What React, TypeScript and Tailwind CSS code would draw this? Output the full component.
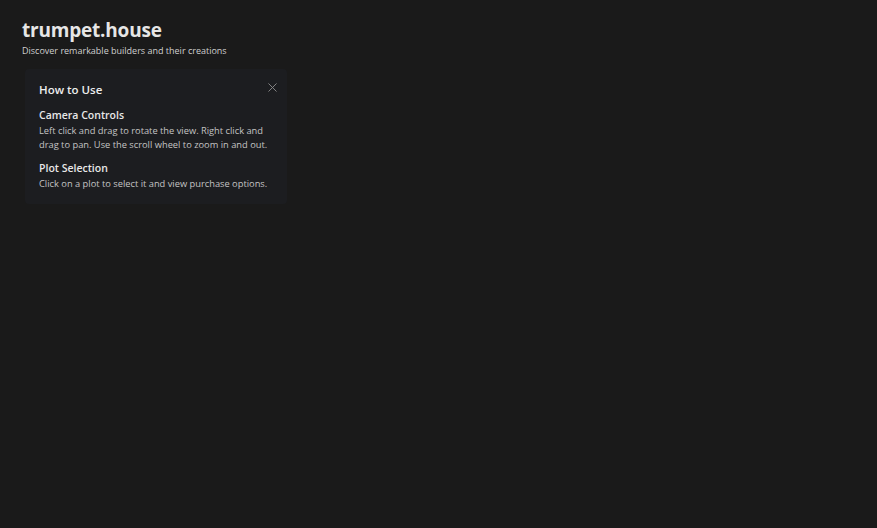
import { X } from 'lucide-react';

export default function App() {
  const sections = [
    {
      title: "Camera Controls",
      desc: "Left click and drag to rotate the view. Right click and drag to pan. Use the scroll wheel to zoom in and out."
    },
    {
      title: "Plot Selection",
      desc: "Click on a plot to select it and view purchase options."
    }
  ];

  return (
    <div className="w-[877px] h-[528px] bg-[#1a1a1a] text-white font-['Open_Sans',sans-serif] overflow-hidden">
      <header className="pt-[17px] pl-[22px]">
        <h1 className="text-[19px] leading-[26px] font-bold text-[#e6e6e6] tracking-[-0.2px]">trumpet.house</h1>
        <p className="text-[9px] leading-[12px] text-[#cfcfcf] mt-[2px]">Discover remarkable builders and their creations</p>
      </header>

      <div className="relative ml-[25px] mt-[12px] w-[262px] bg-[#1c1d20] rounded px-[14px] pt-[13px] pb-[13px]">
        <button className="absolute top-[11px] right-[7px] text-[#8a8a8a]">
          <X size={15} strokeWidth={1.5} />
        </button>
        <h2 className="text-[11.5px] leading-[16px] font-semibold text-[#ededed] mb-[10px]">How to Use</h2>
        <div className="flex flex-col gap-[9px]">
          {sections.map((s, i) => (
            <div key={i}>
              <h3 className="text-[10.5px] leading-[14px] font-semibold text-[#e8e8e8] mb-[2px]">{s.title}</h3>
              <p className="text-[9.3px] leading-[14px] text-[#c4c4c4]">{s.desc}</p>
            </div>
          ))}
        </div>
      </div>
    </div>
  );
}
